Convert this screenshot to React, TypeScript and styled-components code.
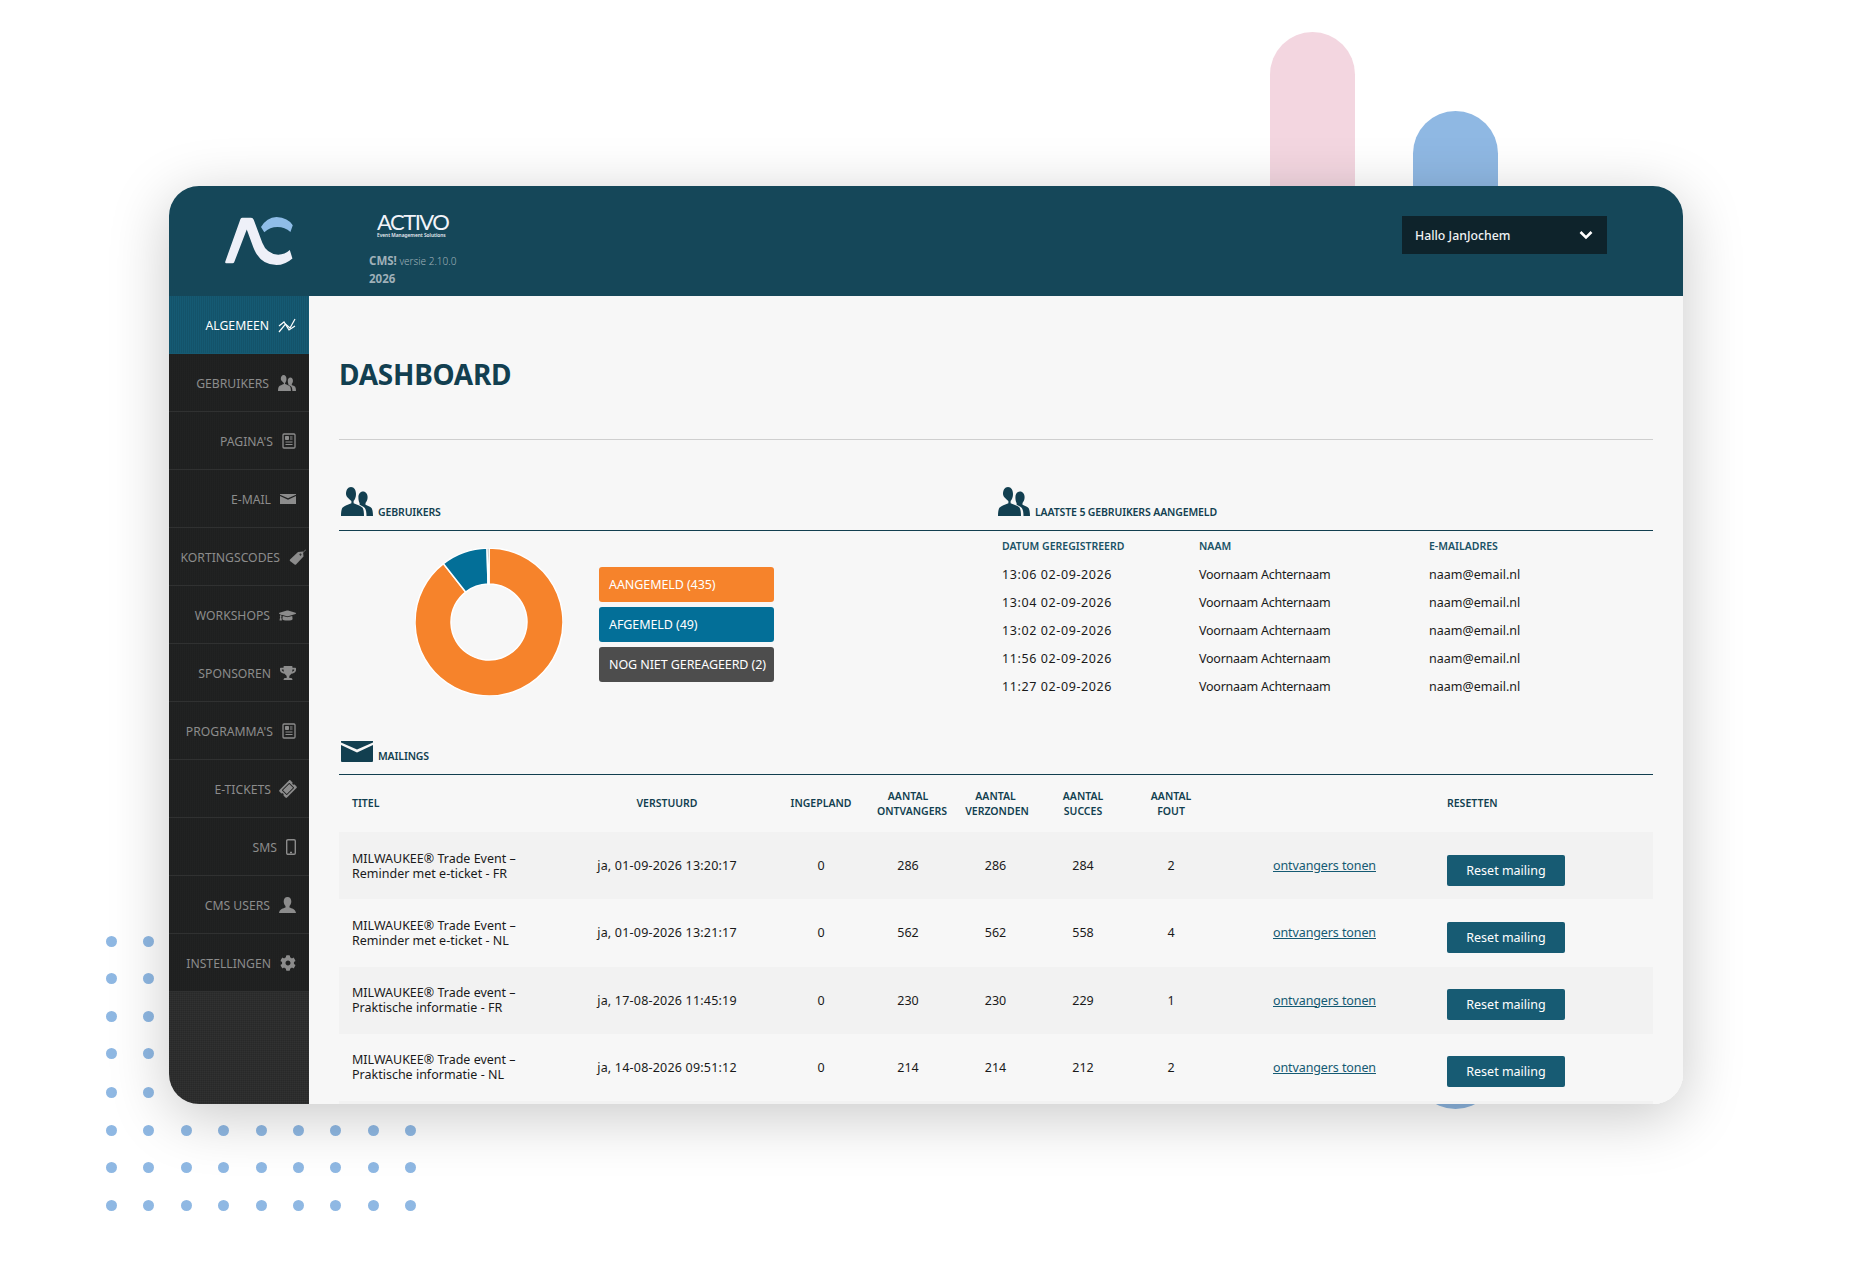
import React from 'react';
import styled, { createGlobalStyle } from 'styled-components';
import { FaGraduationCap, FaTrophy, FaTicketAlt, FaCog } from 'react-icons/fa';

const GlobalStyle = createGlobalStyle`
    html, body {
        margin: 0;
        padding: 0;
        background: #fff;
    }
    * {
        box-sizing: border-box;
    }
`;

const FONT = `"Noto Sans", "Open Sans", sans-serif`;

const Page = styled.div`
    position: relative;
    width: 1851px;
    height: 1265px;
    padding: 186px 0 0 169px;
    overflow: hidden;
    font-family: ${FONT};
`;
const Pill = styled.div<{ $left: number; $top: number; $bottom: number; $color: string }>`
    position: absolute;
    left: ${p => p.$left}px;
    top: ${p => p.$top}px;
    width: 85px;
    height: ${p => p.$bottom - p.$top}px;
    border-radius: 43px;
    background: ${p => p.$color};
`;
const Dots = styled.div`
    position: absolute;
    left: 106px;
    top: 936px;
    display: grid;
    grid-template-columns: repeat(9, 37.4px);
    grid-template-rows: repeat(3, 37.4px) 39.3px repeat(4, 37.5px);
`;
const Dot = styled.span`
    width: 11px;
    height: 11px;
    border-radius: 50%;
    background: #8fb8e3;
`;
const Card = styled.div`
    position: relative;
    width: 1514px;
    height: 918px;
    border-radius: 30px;
    overflow: hidden;
    background: #f7f7f7;
    display: flex;
    flex-direction: column;
`;
const CardShadow = styled.div`
    position: relative;
    width: 1514px;
    height: 918px;
    border-radius: 30px;
    box-shadow: 0 12px 60px rgba(0, 0, 0, 0.22);
`;
const Header = styled.header`
    height: 110px;
    flex: none;
    background: #154759;
    display: flex;
    align-items: flex-start;
`;
const LogoCell = styled.div`
    width: 200px;
    padding: 31px 0 0 56px;
    flex: none;
`;
const Brand = styled.div`
    padding-top: 26px;
    color: #9fb0b8;
    width: 200px;
`;
const Wordmark = styled.div`
    margin-left: 8px;
    width: 71px;
    color: #f2f4f9;
    font-family: "Lato", sans-serif;
    font-weight: 400;
    font-size: 22px;
    line-height: 20px;
    letter-spacing: -1.5px;
    white-space: nowrap;
`;
const WordmarkSub = styled.div`
    margin-left: 8px;
    font-size: 4.8px;
    line-height: 7px;
    font-weight: 600;
    color: #e8ecf2;
    white-space: nowrap;
`;
const CmsLine = styled.div`
    margin-top: 13px;
    font-size: 10px;
    line-height: 17px;
    font-weight: 300;
    white-space: nowrap;
    b {
        font-size: 11.5px;
        font-weight: 700;
    }
`;
const UserBox = styled.div`
    margin: 30px 0 0 833px;
    width: 205px;
    height: 38px;
    padding: 0 14px 0 13px;
    background: #0e232b;
    color: #f0f2f3;
    display: flex;
    align-items: center;
    justify-content: space-between;
    font-size: 12.3px;
    font-weight: 500;
`;
const Body = styled.div`
    flex: 1;
    display: flex;
    min-height: 0;
`;
const Sidebar = styled.nav`
    width: 140px;
    flex: none;
    background-color: #2c2d2d;
    background-image: repeating-linear-gradient(90deg, rgba(0, 0, 0, 0.09) 0 1px, transparent 1px 2px),
        repeating-linear-gradient(0deg, rgba(255, 255, 255, 0.025) 0 1px, transparent 1px 2px);
`;
const NavItem = styled.a<{ $active?: boolean; $pull?: number }>`
    height: 58px;
    padding-right: ${p => 13 - (p.$pull || 0)}px;
    display: flex;
    align-items: center;
    justify-content: flex-end;
    gap: 9px;
    font-size: 12.2px;
    white-space: nowrap;
    color: ${p => (p.$active ? '#fff' : '#8c8c8c')};
    background-color: ${p => (p.$active ? '#155a73' : '#212222')};
    background-image: repeating-linear-gradient(90deg, rgba(0, 0, 0, 0.08) 0 1px, transparent 1px 2px);
    box-shadow: inset 0 -1px 0 ${p => (p.$active ? '#155a73' : '#303131')};
    svg {
        flex: none;
    }
`;
const Main = styled.main`
    flex: 1;
    min-width: 0;
    padding: 0 30px;
    background: #f7f7f7;
`;
const Title = styled.h1`
    margin: 0;
    height: 144px;
    padding-top: 58px;
    border-bottom: 1px solid #cfcfcf;
    color: #123f50;
    font-size: 28px;
    line-height: 40px;
    font-weight: 700;
    letter-spacing: -0.25px;
`;
const Columns = styled.div`
    display: grid;
    grid-template-columns: 657px 1fr;
    margin-top: 47px;
`;
const SectionHead = styled.div<{ $indent?: number }>`
    height: 44px;
    padding: 0 0 14px ${p => p.$indent || 2}px;
    border-bottom: 1px solid #123f50;
    display: flex;
    align-items: flex-end;
    gap: 5px;
    color: #123f50;
    font-size: 10.5px;
    font-weight: 600;
    white-space: nowrap;
`;
const SectionLabel = styled.span`
    margin-bottom: -4px;
    line-height: 16px;
    letter-spacing: -0.13px;
`;
const Split = styled.div`
    display: flex;
`;
const Chart = styled.div`
    width: 260px;
    padding: 17px 0 0 76px;
    svg {
        display: block;
    }
`;
const Legend = styled.div`
    padding-top: 36px;
    display: flex;
    flex-direction: column;
    gap: 5px;
`;
const LegendItem = styled.div<{ $color: string }>`
    width: 175px;
    height: 35px;
    padding-left: 10px;
    border-radius: 3px;
    background: ${p => p.$color};
    color: #fff;
    display: flex;
    align-items: center;
    font-size: 12.5px;
    letter-spacing: -0.08px;
    white-space: nowrap;
`;
const LatestGrid = styled.div`
    display: grid;
    grid-template-columns: 197px 230px 1fr;
    padding: 5px 0 0 6px;
    align-items: start;
    color: #1a1a1a;
    font-size: 12.5px;
    line-height: 28px;
    white-space: nowrap;
`;
const SmallHead = styled.div`
    padding-bottom: 5px;
    color: #1a5266;
    font-size: 10.5px;
    font-weight: 600;
    line-height: 20px;
`;
const DateText = styled.div`
    letter-spacing: 0.6px;
`;
const NameText = styled.div`
    letter-spacing: -0.25px;
`;
const MailSection = styled.div`
    margin-top: 30px;
    ${SectionHead} svg {
        margin-bottom: -2px;
    }
`;
const MailRow = styled.div`
    display: grid;
    grid-template-columns: 217px 222px 86px 88px 87px 88px 88px 219px 219px;
    align-items: center;
`;
const MailHead = styled(MailRow)`
    height: 57px;
    color: #123f50;
    font-size: 10.5px;
    line-height: 15px;
    font-weight: 600;
`;
const DataRow = styled(MailRow)`
    height: 67.25px;
    color: #1a1a1a;
    font-size: 12.5px;
    line-height: 15px;
    &:nth-of-type(odd) {
        background: #f2f2f2;
    }
`;
const Stripe = styled.div`
    height: 4px;
    background: #f2f2f2;
`;
const Cell = styled.div<{ $left?: boolean }>`
    text-align: ${p => (p.$left ? 'left' : 'center')};
    padding-left: ${p => (p.$left ? '13px' : '0')};
    white-space: nowrap;
`;
const SentCell = styled(Cell)`
    letter-spacing: 0.2px;
`;
const WideWord = styled.span<{ $nudge: number }>`
    display: inline-block;
    margin-left: ${p => p.$nudge}px;
`;
const LinkText = styled.a`
    color: #155a73;
    text-decoration: underline;
    font-size: 12.5px;
    letter-spacing: -0.1px;
`;
const ResetButton = styled.button`
    display: block;
    margin: 9px 0 0 13px;
    width: 118px;
    height: 31px;
    border: 0;
    border-radius: 2px;
    background: #175b73;
    color: #fff;
    font-family: inherit;
    font-size: 12.5px;
`;

const nav = [
    { label: 'ALGEMEEN', icon: 'chart', active: true },
    { label: 'GEBRUIKERS', icon: 'users' },
    { label: "PAGINA'S", icon: 'page' },
    { label: 'E-MAIL', icon: 'mail' },
    { label: 'KORTINGSCODES', icon: 'tag', pull: 10 },
    { label: 'WORKSHOPS', icon: 'cap' },
    { label: 'SPONSOREN', icon: 'trophy' },
    { label: "PROGRAMMA'S", icon: 'page' },
    { label: 'E-TICKETS', icon: 'ticket' },
    { label: 'SMS', icon: 'phone' },
    { label: 'CMS USERS', icon: 'user' },
    { label: 'INSTELLINGEN', icon: 'cog' },
];

const latest = ['13:06', '13:04', '13:02', '11:56', '11:27'];

const mailings = [
    { a: 'MILWAUKEE® Trade Event –', b: 'Reminder met e-ticket - FR', sent: 'ja, 01-09-2026 13:20:17', n: [286, 286, 284, 2] },
    { a: 'MILWAUKEE® Trade Event –', b: 'Reminder met e-ticket - NL', sent: 'ja, 01-09-2026 13:21:17', n: [562, 562, 558, 4] },
    { a: 'MILWAUKEE® Trade event –', b: 'Praktische informatie - FR', sent: 'ja, 17-08-2026 11:45:19', n: [230, 230, 229, 1] },
    { a: 'MILWAUKEE® Trade event –', b: 'Praktische informatie - NL', sent: 'ja, 14-08-2026 09:51:12', n: [214, 214, 212, 2] },
];

const UsersIcon = ({ w, color }: { w: number; color: string }) => (
    <svg width={w} viewBox="0 0 32 29" fill={color}>
        <path d="M10 0c3.200 0 5 3 5 7 0 3-1 5.500-2.400 7v2.200c3 1.200 7.400 2.600 9 4.600 1 1.300 1.400 4.700 1.400 8.200H0c0-3.500.4-6.900 1.400-8.200 1.600-2 6-3.400 9-4.600V14C9 12.500 5 10 5 7c0-4 1.800-7 5-7z" />
        <path d="M22 4.500c2.800 0 4.600 2.500 4.600 5.800 0 2.400-.9 4.400-2.100 5.700v1.800c2 .9 4.800 1.800 6 3.200.9 1.100 1.500 4.500 1.500 8h-6.500c0-3.500-.5-6.500-1.700-8-1.200-1.400-3.300-2.400-5.200-3.200V16c-.8-1.100-1.200-3.400-1.200-5.700 0-3.300 1.800-5.800 4.600-5.800z" />
    </svg>
);

const MailIcon = ({ w, color }: { w: number; color: string }) => (
    <svg width={w} viewBox="0 0 32 21" fill={color}>
        <path d="M0 0h32v1.500L16 8.500 0 1.500z" />
        <path d="M0 4l16 7.500L32 4v16a1 1 0 0 1-1 1H1a1 1 0 0 1-1-1z" />
    </svg>
);

const NavIcon = ({ name, color }: { name: string; color: string }) => {
    switch (name) {
        case 'chart':
            return (
                <svg width="18" height="15" viewBox="0 0 18 15" fill="none" stroke={color} strokeWidth="1.200">
                    <path d="M1 14l6.500-8 4.500 4 5-9" />
                    <path d="M1 8l5-4 5 8 6-4" />
                </svg>
            );
        case 'users':
            return <UsersIcon w={18} color={color} />;
        case 'page':
            return (
                <svg width="14" height="16" viewBox="0 0 14 16" fill="none" stroke={color}>
                    <rect x="1" y="1" width="12" height="14" rx="1" strokeWidth="1.300" />
                    <path d="M3.500 3.500h3v3h-3z" fill={color} />
                    <path d="M8 4h2.500M8 6h2.500M3.500 9h7M3.500 11.500h7" />
                </svg>
            );
        case 'mail':
            return <MailIcon w={16} color={color} />;
        case 'tag':
            return (
                <svg width="17" height="17" viewBox="0 0 17 17" fill={color}>
                    <path fillRule="evenodd" d="M1 10.500L9 3l5-.5.5 5L7 15.500a1 1 0 0 1-1.400 0L1 11.900a1 1 0 0 1 0-1.400zM11.500 4.500a1 1 0 1 0 .01 0z" />
                    <path d="M12 5.500L17 .5" stroke={color} strokeWidth=".8" fill="none" />
                </svg>
            );
        case 'cap':
            return <FaGraduationCap size={17} color={color} />;
        case 'trophy':
            return <FaTrophy size={16} color={color} />;
        case 'ticket':
            return <FaTicketAlt size={16} color={color} style={{ transform: 'rotate(-45deg)' }} />;
        case 'phone':
            return (
                <svg width="10" height="16" viewBox="0 0 10 16" fill="none" stroke={color} strokeWidth="1.400">
                    <rect x="0.700" y="0.700" width="8.600" height="14.600" rx="1.200" />
                    <path d="M4 13.500h2" />
                </svg>
            );
        case 'user':
            return (
                <svg width="17" height="16" viewBox="0 0 17 16" fill={color}>
                    <path d="M8.500 0c2.500 0 3.800 2 3.800 4.500 0 2-1 3.700-1.800 4.500v1.500c2 .8 6 1.500 6.500 5.500H0c.5-4 4.500-4.700 6.500-5.500V9C5.700 8.200 4.700 6.500 4.700 4.500 4.700 2 6 0 8.500 0z" />
                </svg>
            );
        default:
            return <FaCog size={16} color={color} />;
    }
};

const AcLogo = () => (
    <svg width="68" height="48" viewBox="0 0 204 145">
        <path
            fill="#eef0f8"
            d="M0 135L46 6Q48 2 52 2L78 2Q84 2 86 8L112 78Q125 112 160 114Q180 114 195 100L203 125Q180 145 155 145Q105 145 85 92L65 38L27 137Q26 140 22 140L3 140Q-1 140 0 135Z"
        />
        <path fill="#8fbde8" d="M108 30Q125 2 155 0Q190 2 204 25L197 45Q180 30 158 30Q135 30 118 46Z" />
    </svg>
);

const Chevron = () => (
    <svg width="14" height="10" viewBox="0 0 14 10" fill="none" stroke="#fff" strokeWidth="2.600">
        <path d="M1.500 2l5.500 5.500L12.500 2" />
    </svg>
);

const Donut = () => {
    const arc = (from: number, to: number) => {
        const r = (d: number) => ((d - 90) * Math.PI) / 180;
        const p = (rad: number, d: number) => `${74 + rad * Math.cos(r(d))} ${74 + rad * Math.sin(r(d))}`;
        const large = to - from > 180 ? 1 : 0;
        return `M${p(74, from)}A74 74 0 ${large} 1 ${p(74, to)}L${p(38, to)}A38 38 0 ${large} 0 ${p(38, from)}Z`;
    };
    return (
        <svg width="148" height="148" viewBox="0 0 148 148" stroke="#fff" strokeWidth="1.500">
            <path d={arc(0, 322)} fill="#f6832b" />
            <path d={arc(322, 358.500)} fill="#036f98" />
            <path d={arc(358.500, 360)} fill="#4d4d4d" />
        </svg>
    );
};

export default function App() {
    return (
        <Page>
            <GlobalStyle />
            <Pill $left={1270} $top={32} $bottom={300} $color="#f3d6e0" />
            <Pill $left={1413} $top={111} $bottom={1109} $color="#8fb8e3" />
            <Dots>
                {Array.from({ length: 72 }).map((_, i) => (
                    <Dot key={i} />
                ))}
            </Dots>
            <CardShadow>
                <Card>
                    <Header>
                        <LogoCell>
                            <AcLogo />
                        </LogoCell>
                        <Brand>
                            <Wordmark>ACTIVO</Wordmark>
                            <WordmarkSub>Event Management Solutions</WordmarkSub>
                            <CmsLine>
                                <b>CMS!</b> versie 2.10.0
                                <br />
                                <b>2026</b>
                            </CmsLine>
                        </Brand>
                        <UserBox>
                            Hallo JanJochem
                            <Chevron />
                        </UserBox>
                    </Header>
                    <Body>
                        <Sidebar>
                            {nav.map(item => (
                                <NavItem key={item.label} $active={item.active} $pull={item.pull}>
                                    {item.label}
                                    <NavIcon name={item.icon} color={item.active ? '#fff' : '#8c8c8c'} />
                                </NavItem>
                            ))}
                        </Sidebar>
                        <Main>
                            <Title>DASHBOARD</Title>
                            <Columns>
                                <div>
                                    <SectionHead>
                                        <UsersIcon w={32} color="#123f50" />
                                        <SectionLabel>GEBRUIKERS</SectionLabel>
                                    </SectionHead>
                                    <Split>
                                        <Chart>
                                            <Donut />
                                        </Chart>
                                        <Legend>
                                            <LegendItem $color="#f6832b">AANGEMELD (435)</LegendItem>
                                            <LegendItem $color="#036f98">AFGEMELD (49)</LegendItem>
                                            <LegendItem $color="#4d4d4d">NOG NIET GEREAGEERD (2)</LegendItem>
                                        </Legend>
                                    </Split>
                                </div>
                                <div>
                                    <SectionHead>
                                        <UsersIcon w={32} color="#123f50" />
                                        <SectionLabel>LAATSTE 5 GEBRUIKERS AANGEMELD</SectionLabel>
                                    </SectionHead>
                                    <LatestGrid>
                                        <SmallHead>DATUM GEREGISTREERD</SmallHead>
                                        <SmallHead>NAAM</SmallHead>
                                        <SmallHead>E-MAILADRES</SmallHead>
                                        {latest.map(time => (
                                            <React.Fragment key={time}>
                                                <DateText>{time} 02-09-2026</DateText>
                                                <NameText>Voornaam Achternaam</NameText>
                                                <div>naam@email.nl</div>
                                            </React.Fragment>
                                        ))}
                                    </LatestGrid>
                                </div>
                            </Columns>
                            <MailSection>
                                <SectionHead>
                                    <MailIcon w={32} color="#123f50" />
                                    <SectionLabel>MAILINGS</SectionLabel>
                                </SectionHead>
                                <MailHead>
                                    <Cell $left>TITEL</Cell>
                                    <Cell>VERSTUURD</Cell>
                                    <Cell>INGEPLAND</Cell>
                                    <Cell>AANTAL<br /><WideWord $nudge={8}>ONTVANGERS</WideWord></Cell>
                                    <Cell>AANTAL<br /><WideWord $nudge={3}>VERZONDEN</WideWord></Cell>
                                    <Cell>AANTAL<br />SUCCES</Cell>
                                    <Cell>AANTAL<br />FOUT</Cell>
                                    <Cell />
                                    <Cell $left>RESETTEN</Cell>
                                </MailHead>
                                {mailings.map(m => (
                                    <DataRow key={m.b + m.sent}>
                                        <Cell $left>{m.a}<br />{m.b}</Cell>
                                        <SentCell>{m.sent}</SentCell>
                                        <Cell>0</Cell>
                                        {m.n.map((v, i) => (
                                            <Cell key={i}>{v}</Cell>
                                        ))}
                                        <Cell><LinkText>ontvangers tonen</LinkText></Cell>
                                        <div><ResetButton>Reset mailing</ResetButton></div>
                                    </DataRow>
                                ))}
                                <Stripe />
                            </MailSection>
                        </Main>
                    </Body>
                </Card>
            </CardShadow>
        </Page>
    );
}
